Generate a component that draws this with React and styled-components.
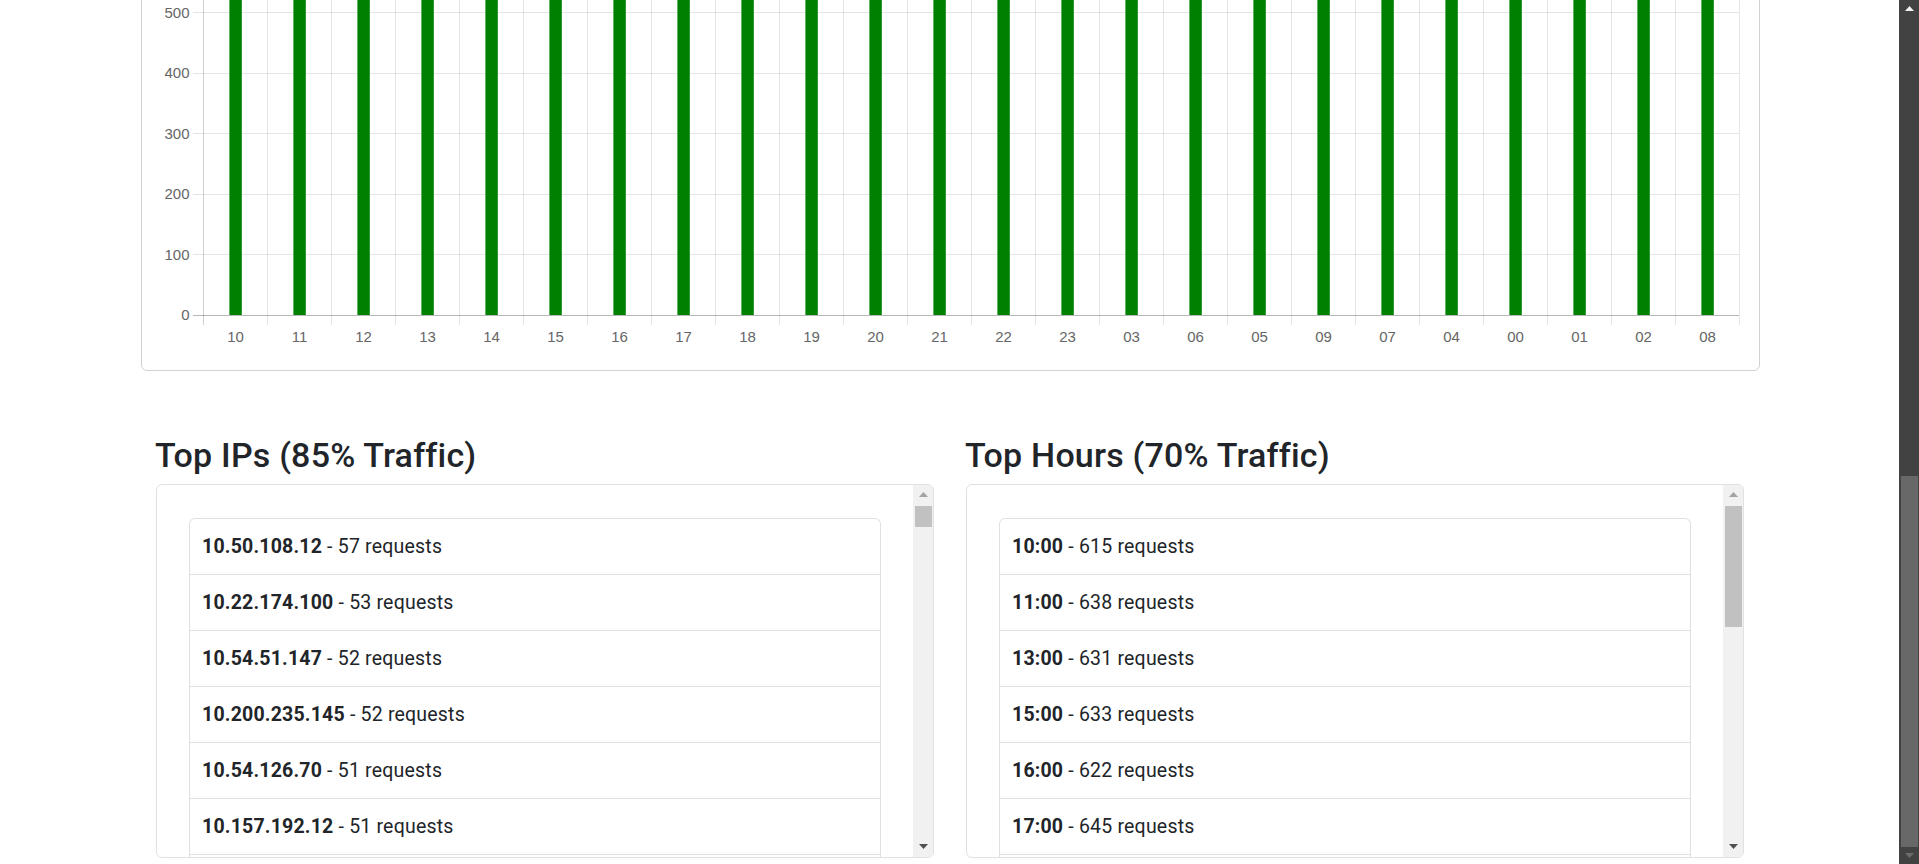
import React from "react";
import styled, { createGlobalStyle } from "styled-components";

const GlobalStyle = createGlobalStyle`
  *, *::before, *::after { box-sizing: border-box; }
  html, body {
    margin: 0;
    padding: 0;
    height: 100%;
    overflow: hidden;
    background: #fff;
  }
  body {
    font-family: Roboto, "Liberation Sans", Arial, sans-serif;
    color: #212529;
  }
`;

// chart data, in the order the hours first show up in the log
const hourly = [
  ["10", 615], ["11", 638], ["12", 604], ["13", 631], ["14", 606], ["15", 633],
  ["16", 622], ["17", 645], ["18", 627], ["19", 624], ["20", 629], ["21", 619],
  ["22", 617], ["23", 612], ["03", 596], ["06", 611], ["05", 613], ["09", 616],
  ["07", 614], ["04", 590], ["00", 588], ["01", 593], ["02", 599], ["08", 610],
];

const topIps = [
  ["10.50.108.12", 57],
  ["10.22.174.100", 53],
  ["10.54.51.147", 52],
  ["10.200.235.145", 52],
  ["10.54.126.70", 51],
  ["10.157.192.12", 51],
  ["10.31.77.204", 50],
];
const IP_TOTAL = 105;

const topHours = hourly.filter(([, n]) => n >= 610);

// rows rendered into the box: six fit, the seventh starts at the fold
const VISIBLE_ROWS = 7;

const Screen = styled.div`
  display: flex;
  height: 100vh;
`;

const Page = styled.main`
  flex: 1;
  min-width: 0;
  overflow: hidden;
  padding: 0 139px 0 141px;
`;

const ChartCard = styled.div`
  margin-top: -139px;
  border: 1px solid rgba(0, 0, 0, 0.175);
  border-radius: 6px;
  padding: 16px;

  & > svg {
    display: block;
  }
`;

const Lists = styled.section`
  display: grid;
  grid-template-columns: 1fr 1fr;
  column-gap: 32px;
  padding: 0 16px 0 15px;
  margin-top: 64px;
`;

const Heading = styled.h3`
  margin: 0 0 8px -1px;
  font-family: Roboto, "Liberation Sans", Arial, sans-serif;
  font-weight: 500;
  font-size: 34px;
  line-height: 1.2;
  letter-spacing: 0.2px;
  color: #212529;
`;

const ScrollBox = styled.div`
  display: flex;
  height: 374px;
  border: 1px solid #dee2e6;
  border-radius: 6px;
  overflow: hidden;
`;

const Viewport = styled.div`
  flex: 1;
  min-width: 0;
  overflow: hidden;
  padding: 33px 32px 0;
`;

const ListGroup = styled.ul`
  list-style: none;
  margin: 0;
  padding: 0;
  border: 1px solid #dee2e6;
  border-bottom: 0;
  border-radius: 6px 6px 0 0;
`;

const Item = styled.li`
  padding: 13px 12px;
  font-size: 19.5px;
  line-height: 29px;
  letter-spacing: 0.2px;
  color: #212529;
  border-bottom: 1px solid #dee2e6;

  b {
    font-weight: 700;
  }
`;

const Track = styled.div`
  flex: none;
  width: 20px;
  display: flex;
  flex-direction: column;
  background: ${({ $dark }) => ($dark ? "#424242" : "#f1f1f1")};
`;

const ScrollButton = styled.div`
  flex: none;
  height: ${({ $size }) => $size}px;
  display: flex;
  align-items: center;
  justify-content: center;
  color: ${({ $color }) => $color};

  & > svg {
    display: block;
  }
`;

const Rail = styled.div`
  flex: 1;
  min-height: 0;
  display: flex;
  flex-direction: column;
`;

const Thumb = styled.div`
  flex: none;
  margin: ${({ $offset }) => $offset}px 1px 0 2px;
  height: ${({ $length }) => $length}px;
  background: ${({ $color }) => $color};
`;

const Arrow = ({ down }) => (
  <svg width="9" height="5" viewBox="0 0 9 5">
    <polygon points={down ? "0,0 9,0 4.5,5" : "0,5 9,5 4.5,0"} fill="currentColor" />
  </svg>
);

function Scrollbar({ dark, button, offset, length, upColor, downColor, thumbColor }) {
  return (
    <Track $dark={dark}>
      <ScrollButton $size={button} $color={upColor}>
        <Arrow />
      </ScrollButton>
      <Rail>
        <Thumb $offset={offset} $length={length} $color={thumbColor} />
      </Rail>
      <ScrollButton $size={button} $color={downColor}>
        <Arrow down />
      </ScrollButton>
    </Track>
  );
}

// list box: 372px of client height, 33px top pad, 32px bottom pad, 56px per row
const BOX_CLIENT = 372;
const BOX_RAIL = BOX_CLIENT - 40;
const thumbFor = (rows) => Math.round((BOX_RAIL * BOX_CLIENT) / (66 + rows * 56));

function TopList({ title, rows, total }) {
  return (
    <div>
      <Heading>{title}</Heading>
      <ScrollBox>
        <Viewport>
          <ListGroup>
            {rows.slice(0, VISIBLE_ROWS).map(([label, n]) => (
              <Item key={label}>
                <b>{label}</b> - {n} requests
              </Item>
            ))}
          </ListGroup>
        </Viewport>
        <Scrollbar
          button={20}
          offset={1}
          length={thumbFor(total)}
          upColor="#a3a3a3"
          downColor="#505050"
          thumbColor="#c1c1c1"
        />
      </ScrollBox>
    </div>
  );
}

// chart in page pixels: y axis at x=203, zero line at y=315
const X0 = 203;
const STEP = 64;
const ZERO = 315;
const PER_UNIT = 0.6054;
const yFor = (v) => ZERO - v * PER_UNIT;
const crisp = (n) => Math.round(n) + 0.5;

function HourChart() {
  const right = X0 + STEP * hourly.length;
  const grid = [0, 100, 200, 300, 400, 500, 600, 700];
  const labels = grid.filter((t) => yFor(t) > 0);
  return (
    <svg width="1585" height="476" viewBox="158 -122 1585 476">
      <g stroke="rgba(0,0,0,0.1)" strokeWidth="1">
        {grid.map((t) => (
          <line key={t} x1={193} x2={right} y1={crisp(yFor(t))} y2={crisp(yFor(t))} />
        ))}
        {hourly.map((_, i) => (
          <line key={i} x1={X0 + STEP * (i + 1) + 0.5} x2={X0 + STEP * (i + 1) + 0.5} y1={-122} y2={325} />
        ))}
      </g>
      <line x1={X0 + 0.5} x2={X0 + 0.5} y1={-122} y2={325} stroke="rgba(0,0,0,0.18)" />
      <line x1={193} x2={right} y1={ZERO + 0.5} y2={ZERO + 0.5} stroke="rgba(0,0,0,0.2)" />
      <g fill="#008000">
        {hourly.map(([h, n], i) => (
          <rect key={h} x={X0 + 26.4 + STEP * i} y={yFor(n)} width={12.4} height={ZERO - yFor(n)} />
        ))}
      </g>
      <g fill="#666" fontFamily="'Liberation Sans', Arial, sans-serif" fontSize="15">
        {labels.map((t) => (
          <text key={t} x={189.5} y={yFor(t) + 5.3} textAnchor="end">
            {t}
          </text>
        ))}
        {hourly.map(([h], i) => (
          <text key={h} x={X0 + 32.5 + STEP * i} y={342.3} textAnchor="middle">
            {h}
          </text>
        ))}
      </g>
    </svg>
  );
}

export default function App() {
  return (
    <>
      <GlobalStyle />
      <Screen>
        <Page>
          <ChartCard>
            <HourChart />
          </ChartCard>
          <Lists>
            <TopList title="Top IPs (85% Traffic)" rows={topIps} total={IP_TOTAL} />
            <TopList
              title="Top Hours (70% Traffic)"
              rows={topHours.map(([h, n]) => [`${h}:00`, n])}
              total={topHours.length}
            />
          </Lists>
        </Page>
        <Scrollbar
          dark
          button={17}
          offset={459}
          length={371}
          upColor="#f1f1f1"
          downColor="#6b6b6b"
          thumbColor="#686868"
        />
      </Screen>
    </>
  );
}
